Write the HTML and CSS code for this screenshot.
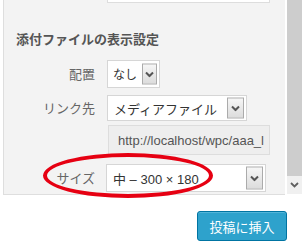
FILE: index.html
```html
<!DOCTYPE html>
<html lang="ja">
<head>
  <meta charset="UTF-8">
  <title>添付ファイルの表示設定</title>
  <link rel="stylesheet" href="styles.css">
</head>
<body>
  <div class="panel">
    <div class="sidebar">
      <div class="caption-end"></div>
      <h2 class="heading">添付ファイルの表示設定</h2>

      <div class="setting row-align">
        <span class="label">配置</span>
        <div class="select">
          <span class="value">なし</span>
          <span class="arrow"><svg width="9" height="6" viewBox="0 0 9 6"><polyline points="1,1 4.5,4.5 8,1" fill="none" stroke="#555" stroke-width="2"/></svg></span>
        </div>
      </div>

      <div class="setting row-link">
        <span class="label">リンク先</span>
        <div class="select">
          <span class="value">メディアファイル</span>
          <span class="arrow"><svg width="9" height="6" viewBox="0 0 9 6"><polyline points="1,1 4.5,4.5 8,1" fill="none" stroke="#555" stroke-width="2"/></svg></span>
        </div>
      </div>

      <div class="setting row-url">
        <span class="label"></span>
        <div class="url"><span>http://localhost/wpc/aaa_l</span></div>
      </div>

      <div class="setting row-size">
        <span class="label">サイズ</span>
        <div class="select">
          <span class="value latin">中 – 300 × 180</span>
          <span class="arrow"><svg width="9" height="6" viewBox="0 0 9 6"><polyline points="1,1 4.5,4.5 8,1" fill="none" stroke="#555" stroke-width="2"/></svg></span>
        </div>
      </div>
    </div>

    <div class="scrollbar">
      <div class="thumb"></div>
      <div class="scroll-down"><svg width="9" height="6" viewBox="0 0 9 6"><polyline points="1,1 4.5,4.5 8,1" fill="none" stroke="#606060" stroke-width="1.8"/></svg></div>
    </div>
  </div>

  <div class="toolbar">
    <button class="btn-insert">投稿に挿入</button>
  </div>

  <!-- 赤い丸で囲む -->
  <div class="highlight"></div>
</body>
</html>
```

FILE: styles.css
```css
html, body {
  margin: 0;
  padding: 0;
}

body {
  position: relative;
  width: 303px;
  height: 252px;
  overflow: hidden;
  background: #fff;
  font-family: "Noto Sans", "Noto Sans CJK JP", sans-serif;
  font-size: 13px;
  color: #444;
}

.panel {
  display: flex;
  height: 195px;
}

.sidebar {
  width: 281px;
  margin-left: 3px;
  border-left: 1px solid #dedede;
  border-bottom: 1px solid #dedede;
  background: #f3f3f3;
}

.caption-end {
  width: 161px;
  height: 2px;
  margin-left: 103px;
  background: #fff;
  border: 1px solid #ddd;
  border-top: 0;
}

.heading {
  margin: 27px 0 0 12px;
  font-size: 13px;
  line-height: 18px;
  font-weight: bold;
  color: #555;
}

.setting {
  display: grid;
  grid-template-columns: 91px auto;
  column-gap: 12px;
  align-items: center;
}

.label {
  text-align: right;
  color: #666;
  line-height: 16px;
}

.select {
  position: relative;
  display: flex;
  align-items: center;
  box-sizing: border-box;
  background: #fff;
  border: 1px solid #d6d6d6;
  padding-left: 6px;
  color: #333;
}

.latin {
  font-family: "Liberation Sans", "Noto Sans CJK JP", sans-serif;
}

.arrow {
  position: absolute;
  right: 2px;
  top: 50%;
  transform: translateY(-50%);
  display: flex;
  align-items: center;
  justify-content: center;
  box-sizing: border-box;
  width: 17px;
  border: 1px solid #ababab;
  background: linear-gradient(#f6f6f6, #dcdcdc);
}

.row-align {
  margin-top: 12px;
}
.row-align .select {
  width: 53px;
  height: 28px;
  padding-left: 5px;
}
.row-align .value {
  font-size: 12px;
}
.row-align .arrow {
  height: 21px;
  width: 15px;
}

.row-link {
  margin-top: 7px;
}
.row-link .select {
  width: 140px;
  height: 26px;
}
.row-link .arrow {
  height: 21px;
}

.row-url {
  margin-top: 4px;
}
.url {
  box-sizing: border-box;
  width: 162px;
  height: 30px;
  margin-left: 1px;
  padding: 0 6px 0 9px;
  border: 1px solid #ddd;
  background: #eee;
  display: flex;
  align-items: center;
  color: #555;
  font-family: "Liberation Sans", sans-serif;
}
.url span {
  white-space: nowrap;
}

.row-size {
  margin-top: 9px;
}
.row-size .select {
  width: 160px;
  height: 28px;
  margin-left: -1px;
}
.row-size .arrow {
  height: 23px;
}

.scrollbar {
  display: flex;
  flex-direction: column;
  width: 15px;
  height: 194px;
  margin-left: 2px;
  background: #f0f0f0;
}
.thumb {
  height: 176px;
  background: #cdcdcd;
}
.scroll-down {
  flex: 1;
  display: flex;
  align-items: center;
  justify-content: center;
}

.toolbar {
  display: flex;
  justify-content: flex-end;
  padding: 16px 16px 0 0;
}

.btn-insert {
  box-sizing: border-box;
  width: 90px;
  height: 30px;
  padding: 0;
  border: 1px solid #0074a2;
  border-radius: 3px;
  background: #2ea2cc;
  box-shadow: inset 0 1px 0 rgba(120, 200, 230, .5);
  color: #fff;
  font-family: inherit;
  font-size: 13px;
}

.highlight {
  position: absolute;
  left: 43px;
  top: 153px;
  width: 170px;
  height: 45px;
  box-sizing: border-box;
  border: 4px solid #e60012;
  border-radius: 50%;
}
```
